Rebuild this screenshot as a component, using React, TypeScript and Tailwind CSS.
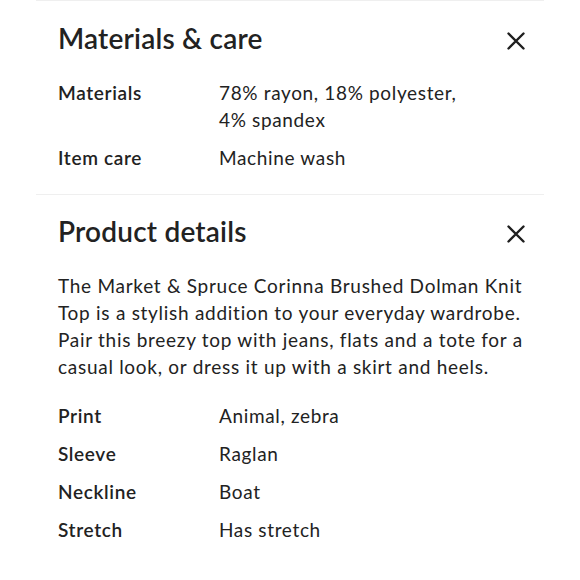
import React from 'react';

interface Row {
  label: string;
  value: string[];
}

const materials: Row[] = [
  { label: 'Materials', value: ['78% rayon, 18% polyester,', '4% spandex'] },
  { label: 'Item care', value: ['Machine wash'] },
];

const details: Row[] = [
  { label: 'Print', value: ['Animal, zebra'] },
  { label: 'Sleeve', value: ['Raglan'] },
  { label: 'Neckline', value: ['Boat'] },
  { label: 'Stretch', value: ['Has stretch'] },
];

const description = [
  'The Market & Spruce Corinna Brushed Dolman Knit',
  'Top is a stylish addition to your everyday wardrobe.',
  'Pair this breezy top with jeans, flats and a tote for a',
  'casual look, or dress it up with a skirt and heels.',
];

const CloseIcon = () => (
  <svg width="18" height="18" viewBox="0 0 18 18" className="mt-[12px] shrink-0">
    <path d="M1.5 1.5 L16.5 16.5 M16.5 1.5 L1.5 16.5" stroke="#1f1f1f" strokeWidth="2.4" strokeLinecap="round" />
  </svg>
);

const Header = ({ title }: { title: string }) => (
  <div className="flex items-start justify-between">
    <h2 className="text-[28px] leading-[36px] font-semibold tracking-[0.2px]">{title}</h2>
    <CloseIcon />
  </div>
);

const Rows = ({ rows }: { rows: Row[] }) => (
  <div className="flex flex-col gap-[11px]">
    {rows.map((r) => (
      <div key={r.label} className="flex text-[19px] leading-[27px] tracking-[0.65px]">
        <div className="w-[161px] shrink-0 font-semibold">{r.label}</div>
        <div>
          {r.value.map((v) => (
            <div key={v}>{v}</div>
          ))}
        </div>
      </div>
    ))}
  </div>
);

const App: React.FC = () => {
  return (
    <div className="h-[580px] w-[580px] bg-white text-[#222222] font-['Lato','Noto_Sans',sans-serif]">
      <div className="mx-[36px]">
        {/* Materials & care */}
        <section className="border-t border-[#efefef] pl-[22px] pr-[19px] pt-[19px] pb-[23px]">
          <Header title="Materials & care" />
          <div className="mt-[23px]">
            <Rows rows={materials} />
          </div>
        </section>

        {/* Product details */}
        <section className="border-t border-[#efefef] pl-[22px] pr-[19px] pt-[18px]">
          <Header title="Product details" />
          <p className="mt-[23px] text-[19px] leading-[27px] tracking-[0.72px] whitespace-nowrap">
            {description.map((line) => (
              <span key={line} className="block">{line}</span>
            ))}
          </p>
          <div className="mt-[22px]">
            <Rows rows={details} />
          </div>
        </section>
      </div>
    </div>
  );
};

export default App;
